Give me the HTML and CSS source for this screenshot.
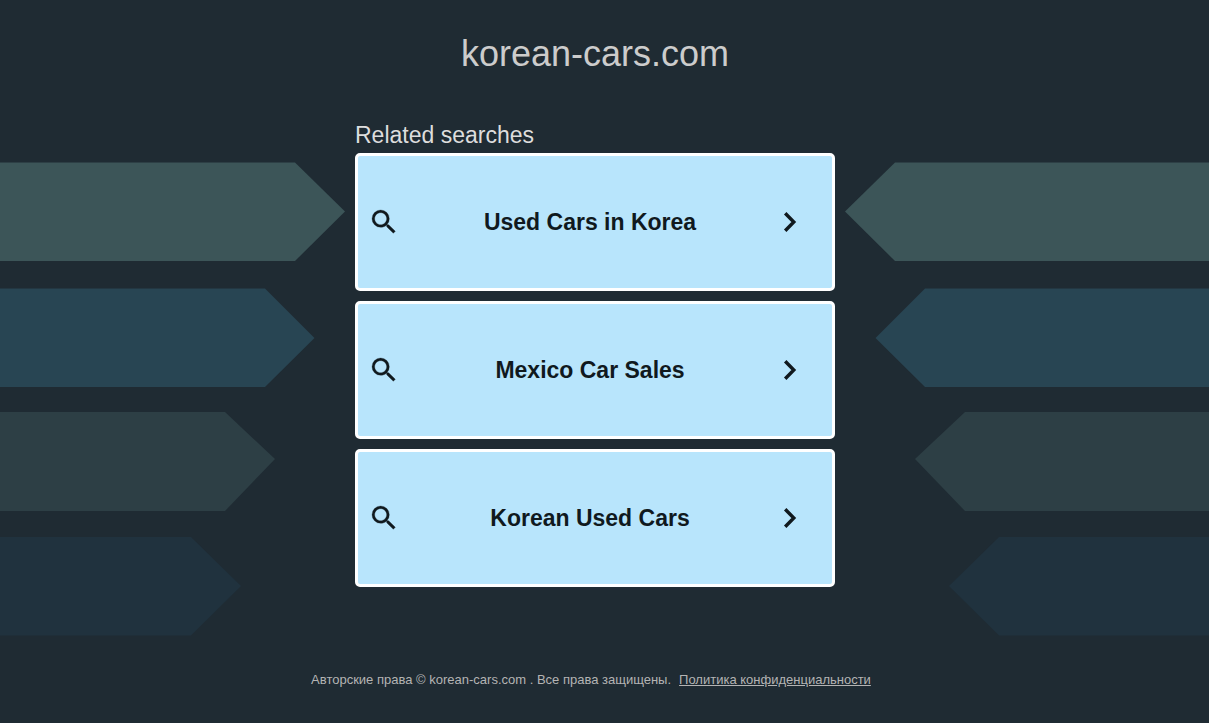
FILE: index.html
```html
<!DOCTYPE html>
<html lang="ru">
<head>
  <meta charset="UTF-8">
  <meta name="viewport" content="width=device-width, initial-scale=1.0">
  <title>korean-cars.com</title>
  <link rel="stylesheet" href="styles.css">
</head>
<body>
  <div class="page">
    <!-- Background arrows -->
    <svg class="arrows" viewBox="-950.5 0 1920 480" preserveAspectRatio="xMidYMin slice" aria-hidden="true">
      <g fill="#3c5558">
        <path d="M-980 .5H-300L-250 49.5L-300 99H-980z"/>
        <path d="M980 .5H300L250 49.5L300 99H980z"/>
      </g>
      <g fill="#284553">
        <path d="M-980 126.5H-330L-280.500 176L-330 225H-980z"/>
        <path d="M980 126.5H330L280.500 176L330 225H980z"/>
      </g>
      <g fill="#2d3f45">
        <path d="M-980 250H-370L-320 297L-370 349H-980z"/>
        <path d="M980 250H370L320 297L370 349H980z"/>
      </g>
      <g fill="#20323e">
        <path d="M-980 375H-404L-354 424L-404 473.500H-980z"/>
        <path d="M980 375H404L354 424L404 473.500H980z"/>
      </g>
    </svg>

    <header class="header">
      <h1>korean-cars.com</h1>
    </header>

    <main class="searches">
      <h2>Related searches</h2>
      <ul class="search-list">
        <li>
          <a class="search-card" href="#">
            <svg class="icon-search" viewBox="0 0 24 24" aria-hidden="true"><path d="M15.5 14h-.79l-.28-.27A6.471 6.471 0 0 0 16 9.500 6.500 6.500 0 1 0 9.500 16c1.610 0 3.090-.59 4.230-1.570l.27.28v.79l5 4.990L20.490 19l-4.990-5zm-6 0C7.010 14 5 11.990 5 9.500S7.010 5 9.500 5 14 7.010 14 9.500 11.990 14 9.500 14z"/></svg>
            <span class="label">Used Cars in Korea</span>
            <svg class="icon-chevron" viewBox="0 0 24 24" aria-hidden="true"><path d="M7.200 3.200L15.800 12L7.200 20.800"/></svg>
          </a>
        </li>
        <li>
          <a class="search-card" href="#">
            <svg class="icon-search" viewBox="0 0 24 24" aria-hidden="true"><path d="M15.5 14h-.79l-.28-.27A6.471 6.471 0 0 0 16 9.500 6.500 6.500 0 1 0 9.500 16c1.610 0 3.090-.59 4.230-1.570l.27.28v.79l5 4.990L20.490 19l-4.990-5zm-6 0C7.010 14 5 11.990 5 9.500S7.010 5 9.500 5 14 7.010 14 9.500 11.990 14 9.500 14z"/></svg>
            <span class="label">Mexico Car Sales</span>
            <svg class="icon-chevron" viewBox="0 0 24 24" aria-hidden="true"><path d="M7.200 3.200L15.800 12L7.200 20.800"/></svg>
          </a>
        </li>
        <li>
          <a class="search-card" href="#">
            <svg class="icon-search" viewBox="0 0 24 24" aria-hidden="true"><path d="M15.5 14h-.79l-.28-.27A6.471 6.471 0 0 0 16 9.500 6.500 6.500 0 1 0 9.500 16c1.610 0 3.090-.59 4.230-1.570l.27.28v.79l5 4.990L20.490 19l-4.990-5zm-6 0C7.010 14 5 11.990 5 9.500S7.010 5 9.500 5 14 7.010 14 9.500 11.990 14 9.500 14z"/></svg>
            <span class="label">Korean Used Cars</span>
            <svg class="icon-chevron" viewBox="0 0 24 24" aria-hidden="true"><path d="M7.200 3.200L15.800 12L7.200 20.800"/></svg>
          </a>
        </li>
      </ul>
    </main>

    <footer class="footer">
      <span>Авторские права © korean-cars.com . Все права защищены.</span>
      <a href="#">Политика конфиденциальности</a>
    </footer>
  </div>
</body>
</html>
```

FILE: styles.css
```css
* {
  box-sizing: border-box;
}

body {
  margin: 0;
  font-family: "Liberation Sans", Arial, sans-serif;
  background: #1f2b33;
  color: #ccc;
}

.page {
  position: relative;
  z-index: 0;
  padding: 33px 29px 32px 10px;
}

.arrows {
  position: absolute;
  z-index: -1;
  top: 162px;
  left: 0;
  width: 100%;
  height: 480px;
}

h1, h2 {
  margin: 0;
  font-weight: normal;
}

.header {
  margin-bottom: 45px;
  text-align: center;
}

h1 {
  font-size: 36px;
  line-height: 42px;
}

.searches {
  max-width: 480px;
  margin: 0 auto;
}

h2 {
  margin-bottom: 3px;
  font-size: 23px;
  line-height: 30px;
  color: #ddd;
}

.search-list {
  display: grid;
  gap: 10px;
  margin: 0;
  padding: 0;
  list-style: none;
}

.search-card {
  display: flex;
  align-items: center;
  min-height: 138px;
  padding: 10px 30px 10px 10px;
  border: 3px solid #fff;
  border-radius: 5px;
  background: #b8e5fc;
  color: #10191e;
  font-size: 23px;
  font-weight: bold;
  text-decoration: none;
}

.search-card:hover {
  background: #d2effd;
}

.search-card svg {
  flex: none;
}

.icon-search {
  width: 32px;
  height: 32px;
  fill: currentColor;
  stroke: currentColor;
  stroke-width: 0.2;
}

.icon-chevron {
  width: 24px;
  height: 24px;
  fill: none;
  stroke: currentColor;
  stroke-width: 3.4;
}

.label {
  flex: 1;
  padding-left: 2px;
  text-align: center;
}

.footer {
  display: flex;
  flex-wrap: wrap;
  justify-content: center;
  column-gap: 8px;
  margin-top: 84px;
  padding-right: 8px;
  font-size: 13px;
  line-height: 18px;
  color: #b4b4b4;
}

.footer a {
  color: inherit;
}
```
